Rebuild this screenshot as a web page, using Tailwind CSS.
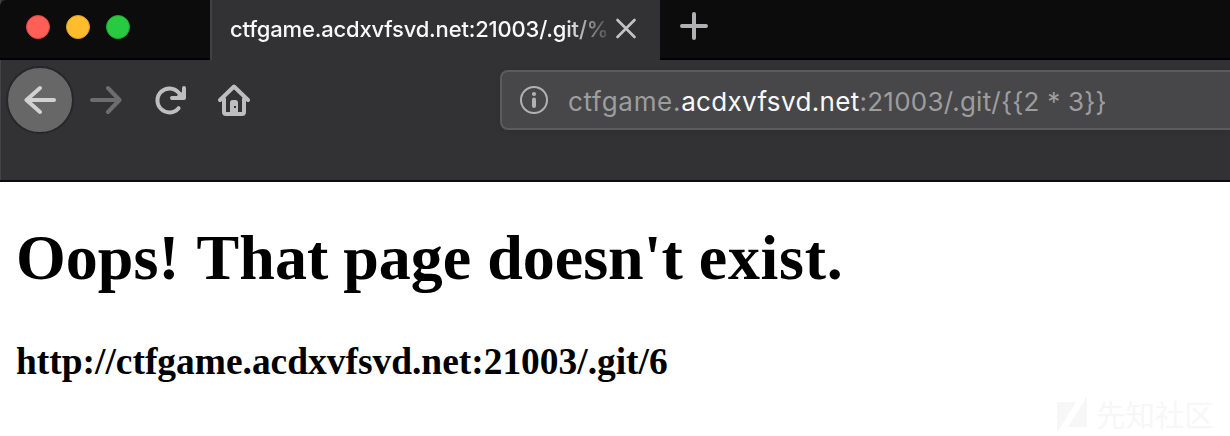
<!DOCTYPE html>
<html lang="en">
<head>
<meta charset="utf-8">
<title>ctfgame.acdxvfsvd.net:21003/.git/</title>
<script src="https://cdn.jsdelivr.net/npm/@tailwindcss/browser@4"></script>
</head>
<body class="relative h-[436px] w-[1230px] overflow-hidden bg-white">
<header class="flex h-[182px] flex-col border-b-2 border-[#0c0c0d] bg-[#323234] font-['Inter','Noto_Sans',sans-serif] shadow-[inset_1px_0_0_#444446]">
  <div class="flex h-[60px] shrink-0">
    <div class="flex w-[210px] items-start gap-4 rounded-tl-md border-b-2 border-[#020202] bg-[#0c0c0c] pt-[15px] pl-[26px]">
      <span class="size-6 rounded-full border border-[#e2463f] bg-[#ff5f57]"></span>
      <span class="size-6 rounded-full border border-[#e0a028] bg-[#ffbd2e]"></span>
      <span class="size-6 rounded-full border border-[#1aab29] bg-[#28ca42]"></span>
    </div>
    <div class="flex w-[450px] border-l-2 border-[#414143] pl-[18px]">
      <div class="w-[376px] text-[22px] leading-[58px] font-medium tracking-[-0.18px] whitespace-nowrap text-[#f9f9fa] [mask-image:linear-gradient(to_right,black_335px,transparent_385px)]">ctfgame.acdxvfsvd.net:21003/.git/%</div>
      <svg class="mt-[17px] ml-[8px] size-[22px]" viewBox="0 0 22 22" fill="none" stroke="#c3c3c4" stroke-width="2.6" stroke-linecap="round"><path d="M3.500 3 20.500 20M20.500 3 3.500 20"/></svg>
    </div>
    <div class="flex-1 border-b-2 border-[#020202] bg-[#0c0c0c] pt-3 pl-5">
      <svg class="size-7" viewBox="0 0 28 28" fill="none" stroke="#b1b1b3" stroke-width="4" stroke-linecap="round"><path d="M14 2V26M2 14H26"/></svg>
    </div>
  </div>
  <div class="flex h-20 shrink-0 items-center">
    <div class="ml-[6px] flex size-[68px] items-center justify-center rounded-full border-2 border-[#272729] bg-[#676767]">
      <svg class="size-8" viewBox="0 0 32 32" fill="none" stroke="#d2d2d2" stroke-width="4" stroke-linecap="round" stroke-linejoin="round"><path d="M30 16H2.5M16 4 2.5 16 16 28"/></svg>
    </div>
    <svg class="ml-4 size-8" viewBox="0 0 32 32" fill="none" stroke="#6d6d6e" stroke-width="4" stroke-linecap="round" stroke-linejoin="round"><path d="M2 16H29.5M18 4 29.5 16 18 28"/></svg>
    <svg class="ml-8 size-8" viewBox="0 0 32 32" fill="none" stroke="#bebebe" stroke-width="4" stroke-linecap="round" stroke-linejoin="round"><path d="M24.6 24.2A12 12 0 1 1 24.5 8.5L28 12.5"/><path d="M30 4V14H18"/><path d="M22 13 30 7V14Z" fill="#bebebe" stroke-width="1"/></svg>
    <svg class="ml-8 size-8" viewBox="0 0 32 32" fill="none" stroke="#bebebe" stroke-width="4" stroke-linecap="round" stroke-linejoin="round"><path d="M2 16 16 2.5 30 16"/><path d="M6 15V28Q6 30 8 30H24Q26 30 26 28V15"/><path d="M12 30V18.500Q12 16 14.500 16H17.500Q20 16 20 18.500V30Z" fill="#bebebe" stroke="none"/><path d="M16 22h2v2h-2z" fill="#323234" stroke="none"/></svg>
    <div class="ml-[250px] flex h-[60px] flex-1 items-center rounded-l-lg border-2 border-r-0 border-[#5b5b5d] bg-[#474749] pl-[18px] shadow-[0_2px_6px_rgba(0,0,0,0.08)]">
      <svg class="size-7 shrink-0" viewBox="0 0 28 28" fill="none" stroke="#b1b1b3"><circle cx="14" cy="14" r="13" stroke-width="2"/><circle cx="14" cy="8" r="2.100" fill="#b1b1b3" stroke="none"/><path d="M14 13.500V20" stroke-width="4" stroke-linecap="round"/></svg>
      <div class="ml-5 pt-[3px] text-[26px] leading-[53px] whitespace-nowrap text-[#9d9d9e]"><span class="tracking-[0.7px]">ctfgame.</span><span class="tracking-[0.35px] text-[#f9f9fa]">acdxvfsvd.net</span><span class="tracking-[0.22px]">:21003/.git/{{2 * 3}}</span></div>
    </div>
  </div>
</header>
<main class="flex flex-col px-4 pt-[39px] font-['Liberation_Serif',serif] font-bold text-black">
  <h1 class="text-[64px] leading-[74px] whitespace-nowrap">Oops! <span class="-mr-px pl-px">That</span> page doesn't <span class="tracking-[0.7px]">exist.</span></h1>
  <h3 class="mt-[45px] text-[37.44px] leading-[43px] whitespace-nowrap">http://ctfgame.acdxvfsvd.net:21003/.git/6</h3>
</main>
<div class="absolute top-[394px] left-[1057px] flex items-center gap-[9px] text-[#f7f7f7]">
  <svg class="h-[40px] w-[30px]" viewBox="0 0 30 40" fill="currentColor"><path d="M0 8H19L0 39ZM30 2V33H11Z"/></svg>
  <span class="relative -top-px font-['Noto_Sans_CJK_SC',sans-serif] text-[29.500px] leading-10 whitespace-nowrap">先知社区</span>
</div>
</body>
</html>
